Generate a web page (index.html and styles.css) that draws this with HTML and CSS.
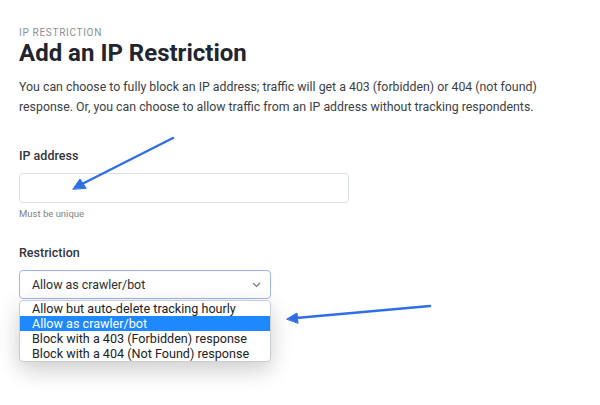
FILE: index.html
```html
<!DOCTYPE html>
<html lang="en">
<head>
  <meta charset="UTF-8" />
  <meta name="viewport" content="width=device-width,initial-scale=1.0">
  <title>Add an IP Restriction</title>
  <link rel="stylesheet" href="styles.css">
</head>
<body>
  <div class="page">
    <div class="eyebrow">IP RESTRICTION</div>
    <h1 class="title">Add an IP Restriction</h1>
    <p class="intro">You can choose to fully block an IP address; traffic will get a 403 (forbidden) or 404 (not found) response. Or, you can choose to allow traffic from an IP address without tracking respondents.</p>

    <div class="field">
      <label class="label">IP address</label>
      <div class="input"></div>
      <div class="hint">Must be unique</div>
    </div>

    <div class="field restriction">
      <label class="label">Restriction</label>
      <div class="select-wrap">
        <div class="select">
          <span>Allow as crawler/bot</span>
          <svg class="chevron" width="9" height="6" viewBox="0 0 9 6"><path d="M1 1l3.5 3.5L8 1" fill="none" stroke="#6b7280" stroke-width="1.2"/></svg>
        </div>
        <ul class="options">
          <li>Allow but auto-delete tracking hourly</li>
          <li class="selected">Allow as crawler/bot</li>
          <li>Block with a 403 (Forbidden) response</li>
          <li>Block with a 404 (Not Found) response</li>
        </ul>
      </div>
    </div>
  </div>

  <!-- annotation arrows -->
  <svg class="arrows" width="600" height="405" viewBox="0 0 600 405">
    <g stroke="#2f6fe4" stroke-width="2.4" stroke-linecap="round" fill="#2f6fe4">
      <line x1="173" y1="138" x2="82" y2="184"/>
      <polygon points="73,189 80,179 86,188" stroke-width="1" stroke-linejoin="round"/>
      <line x1="430" y1="306" x2="296" y2="318"/>
      <polygon points="287,319 297,313 298,323" stroke-width="1" stroke-linejoin="round"/>
    </g>
  </svg>
</body>
</html>
```

FILE: styles.css
```css
html, body {
  margin: 0;
  padding: 0;
  height: 100%;
  background: #fff;
}

body {
  position: relative;
  font-family: Roboto, "Liberation Sans", sans-serif;
  color: #3a3f45;
}

.page {
  padding: 27px 19px 0;
}

.eyebrow {
  font-size: 10px;
  line-height: 12px;
  letter-spacing: 0.7px;
  color: #8a9099;
}

.title {
  margin: 0;
  font-size: 24px;
  line-height: 28px;
  font-weight: 700;
  color: #1f2630;
}

.intro {
  margin: 11px 0 0;
  font-size: 12.35px;
  line-height: 19.5px;
  color: #3b4046;
  width: 560px;
}

.field {
  margin-top: 31px;
}

.label {
  display: block;
  font-size: 12.5px;
  line-height: 16px;
  font-weight: 500;
  color: #30353b;
}

.input {
  margin-top: 9px;
  width: 328px;
  height: 28px;
  border: 1px solid #dcdfe4;
  border-radius: 4px;
}

.hint {
  margin-top: 5px;
  font-size: 9.5px;
  line-height: 12px;
  color: #7d838c;
}

.restriction {
  margin-top: 25px;
}

.select-wrap {
  position: relative;
  margin-top: 9px;
  width: 252px;
}

.select {
  display: flex;
  align-items: center;
  justify-content: space-between;
  height: 27px;
  padding: 0 9px 0 12px;
  border: 1px solid #9db6ef;
  border-radius: 4px;
  font-size: 12.4px;
  color: #2a2e33;
}

.options {
  position: absolute;
  top: 30px;
  left: 0;
  z-index: 5;
  width: 250px;
  margin: 0;
  padding: 0;
  list-style: none;
  background: #fff;
  border: 1px solid #c9ccd1;
  border-radius: 4px;
  box-shadow: 0 8px 22px rgba(0, 0, 0, 0.2);
  overflow: hidden;
  font-size: 12.6px;
  line-height: 15px;
  color: #202226;
}

.options li {
  padding: 0 12px;
  height: 15px;
}

.options li.selected {
  background: #1e88ff;
  color: #fff;
}

.arrows {
  position: absolute;
  top: 0;
  left: 0;
  z-index: 10;
  pointer-events: none;
}
```
